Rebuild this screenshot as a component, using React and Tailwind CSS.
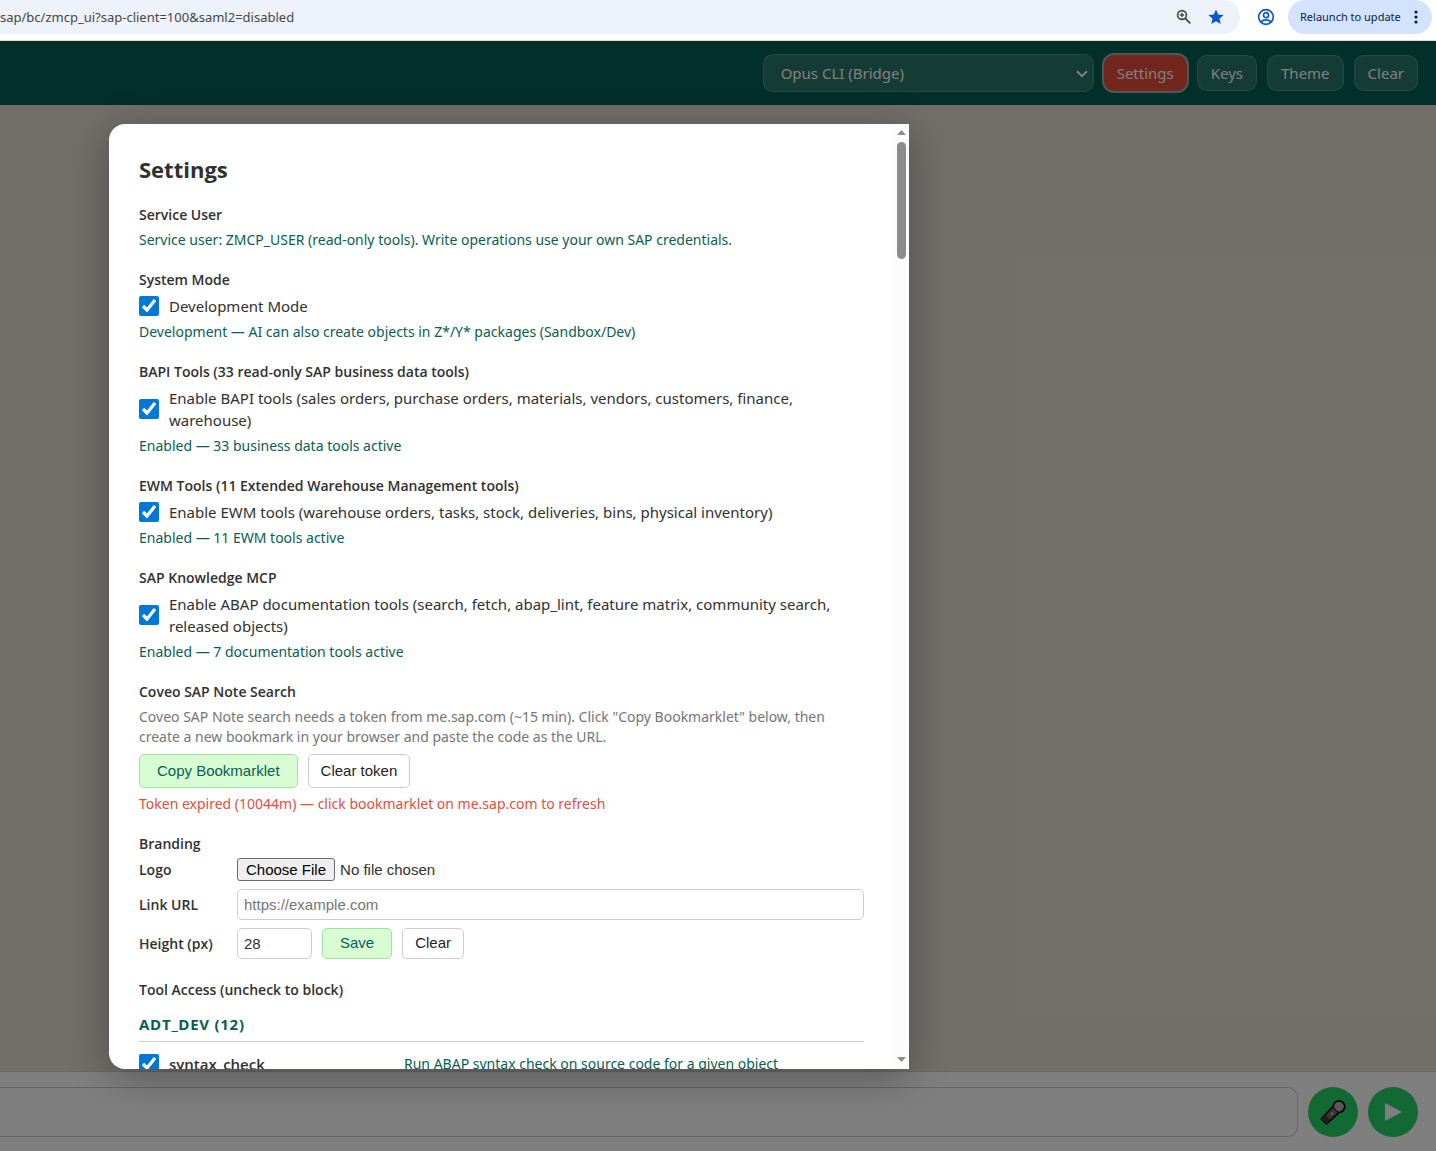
import React from "react";

const labelText = "font-['Open_Sans','Noto_Sans',sans-serif] text-[14px] leading-5 font-semibold text-[#303030]";
const noteText = "text-[14px] leading-5";
const headerButton =
  "flex h-9 items-center rounded-[10px] border border-white/20 bg-white/15 px-[13px] pt-px text-[15px] text-white";
const plainButton =
  "rounded-[5px] border border-[#cccccc] bg-white px-3 font-['Liberation_Sans',Arial,sans-serif] text-[15px] text-[#222]";
const greenButton =
  "rounded-[5px] border border-[#a5e0a0] bg-[#d9fdd3] px-[17px] font-['Liberation_Sans',Arial,sans-serif] text-[15px] text-[#075e54]";
const field =
  "h-[31px] rounded-[5px] border border-[#cccccc] bg-white px-1.5 font-['Liberation_Sans',Arial,sans-serif] text-[15px] text-[#303030] placeholder:text-[#757575]";

function ZoomIcon() {
  return (
    <svg width="16" height="16" viewBox="0 0 16 16" fill="none" stroke="#474747" strokeWidth="1.6">
      <circle cx="6" cy="6" r="4.4" />
      <path d="M9.3 9.3 14.3 14.3" strokeWidth="1.9" />
      <path d="M6 3.8v4.4M3.8 6h4.4" strokeWidth="1.3" />
    </svg>
  );
}

function StarIcon() {
  return (
    <svg width="16" height="16" viewBox="0 0 16 16" fill="#0b57d0">
      <path d="M8 .6 10.2 5.6 15.6 6.1 11.5 9.7 12.7 15 8 12.2 3.3 15 4.5 9.7.4 6.1 5.8 5.6Z" />
    </svg>
  );
}

function ProfileIcon() {
  return (
    <svg width="18" height="18" viewBox="0 0 18 18" fill="none" stroke="#0b57d0" strokeWidth="1.7">
      <circle cx="9" cy="9" r="7.3" />
      <circle cx="9" cy="7.2" r="2.5" />
      <path d="M3.9 14.1c1.3-1.5 3.1-2.2 5.1-2.2s3.8.7 5.1 2.2" />
    </svg>
  );
}

function MicIcon() {
  return (
    <svg width="28" height="28" viewBox="0 0 28 28" strokeLinejoin="round">
      <circle cx="20" cy="8.6" r="5.7" fill="#b0b0b0" stroke="#000" strokeWidth="1.8" />
      <path d="M13.8 8.6 20 14.6 7.6 26 2.2 21Z" fill="#6a6a6a" stroke="#000" strokeWidth="1.6" />
      <path d="M6.2 16.6 11.8 22.2 7.6 26 2.2 21Z" fill="#3c3c3c" stroke="none" />
      <path d="M15 6.6 21.8 13.2 19.4 13.8 14.6 9Z" fill="#8c8c8c" />
      <circle cx="20" cy="8.6" r="4.6" fill="#b0b0b0" />
      <circle cx="13" cy="15.4" r="1.2" fill="#c8c8c8" />
    </svg>
  );
}

function BrowserBar() {
  return (
    <div className="flex h-[41px] shrink-0 items-start border-b border-[#dcdcdc] bg-white pr-1">
      <div className="flex h-[34px] flex-1 items-center rounded-r-full bg-[#edf1fa] pr-4">
        <span className="flex-1 pt-0.5 text-[13px] text-[#474747]">sap/bc/zmcp_ui?sap-client=100&amp;saml2=disabled</span>
        <button type="button" aria-label="Zoom" className="mr-4"><ZoomIcon /></button>
        <button type="button" aria-label="Bookmark"><StarIcon /></button>
      </div>
      <button type="button" aria-label="Profile" className="mr-[13px] ml-[17px] flex h-[34px] items-center"><ProfileIcon /></button>
      <button type="button" className="flex h-[34px] w-36 items-center justify-between rounded-full bg-[#d3e3fd] pr-3.5 pl-3 text-[11px] text-[#041e49]">
        Relaunch to update
        <svg width="4" height="14" viewBox="0 0 4 14" fill="#041e49">
          <circle cx="2" cy="2" r="1.6" />
          <circle cx="2" cy="7" r="1.6" />
          <circle cx="2" cy="12" r="1.6" />
        </svg>
      </button>
    </div>
  );
}

function Header() {
  return (
    <header className="flex h-16 shrink-0 items-center justify-end gap-2.5 bg-[#075e54] pr-[18px]">
      <div className="relative">
        <select aria-label="Model" className="h-[38px] w-[331px] appearance-none rounded-[10px] border border-white/20 bg-white/15 px-[17px] pt-px text-[15px] text-white">
          <option>Opus CLI (Bridge)</option>
        </select>
        <svg className="pointer-events-none absolute top-4 right-1.5" width="12" height="8" viewBox="0 0 12 8" fill="none" stroke="#fff" strokeWidth="2">
          <path d="M1 1.2 6 6.2 11 1.2" />
        </svg>
      </div>
      <button type="button" className="flex h-9 items-center rounded-[10px] bg-[#e74c3c] px-[13px] pt-px text-[15px] text-white ring-2 ring-[#9ab0ad]">Settings</button>
      <button type="button" className={headerButton}>Keys</button>
      <button type="button" className={headerButton}>Theme</button>
      <button type="button" className={headerButton}>Clear</button>
    </header>
  );
}

function Composer() {
  return (
    <footer className="flex h-20 shrink-0 items-center gap-2.5 border-t border-[#d0d0d0] bg-white pr-[18px]">
      <input aria-label="Message" className="h-[50px] min-w-0 flex-1 rounded-r-[10px] border border-l-0 border-[#cccccc] bg-white px-4" />
      <button type="button" aria-label="Record" className="flex size-[50px] items-center justify-center rounded-full bg-[#25d366]"><MicIcon /></button>
      <button type="button" aria-label="Send" className="flex size-[50px] items-center justify-center rounded-full bg-[#25d366]">
        <svg width="18" height="18" viewBox="0 0 18 18" fill="#fff"><path d="M1 0 18 9 1 18Z" /></svg>
      </button>
    </footer>
  );
}

function Section({ title, note, children }) {
  return (
    <section className="mb-5 flex flex-col gap-[5px]">
      <h3 className={labelText}>{title}</h3>
      {children}
      {note && <p className={`${noteText} text-[#075e54]`}>{note}</p>}
    </section>
  );
}

function Toggle({ children }) {
  return (
    <label className="flex items-center gap-2.5 text-[15px] leading-[22px] text-[#303030]">
      <input type="checkbox" defaultChecked className="size-5 shrink-0 accent-[#0078d7]" />
      <span>{children}</span>
    </label>
  );
}

function ScrollTrack() {
  return (
    <div className="flex w-[15px] shrink-0 flex-col items-center bg-[#fcfcfc] pt-1.5 pb-[7px]" aria-hidden="true">
      <svg width="9" height="5" viewBox="0 0 9 5" fill="#8b8b8b"><path d="M0 5 4.5 0 9 5Z" /></svg>
      <div className="mt-[7px] h-[117px] w-[9px] rounded-full bg-[#8b8b8b]" />
      <svg className="mt-auto" width="9" height="5" viewBox="0 0 9 5" fill="#8b8b8b"><path d="M0 0 4.5 5 9 0Z" /></svg>
    </div>
  );
}

function SettingsDialog() {
  return (
    <div role="dialog" aria-labelledby="settings-title" className="flex h-full w-[800px] overflow-hidden rounded-l-2xl bg-white shadow-[0_8px_40px_rgba(0,0,0,0.3)]">
      <div className="min-w-0 flex-1 overflow-hidden px-[30px] pt-[30px]">
        <h2 id="settings-title" className="mb-[21px] font-['Open_Sans','Noto_Sans',sans-serif] text-[22px] leading-[30px] font-bold text-[#303030]">Settings</h2>

        <Section title="Service User" note="Service user: ZMCP_USER (read-only tools). Write operations use your own SAP credentials." />
        <Section title="System Mode" note="Development — AI can also create objects in Z*/Y* packages (Sandbox/Dev)">
          <Toggle>Development Mode</Toggle>
        </Section>
        <Section title="BAPI Tools (33 read-only SAP business data tools)" note="Enabled — 33 business data tools active">
          <Toggle>Enable BAPI tools (sales orders, purchase orders, materials, vendors, customers, finance, warehouse)</Toggle>
        </Section>
        <Section title="EWM Tools (11 Extended Warehouse Management tools)" note="Enabled — 11 EWM tools active">
          <Toggle>Enable EWM tools (warehouse orders, tasks, stock, deliveries, bins, physical inventory)</Toggle>
        </Section>
        <Section title="SAP Knowledge MCP" note="Enabled — 7 documentation tools active">
          <Toggle>Enable ABAP documentation tools (search, fetch, abap_lint, feature matrix, community search, released objects)</Toggle>
        </Section>
        <Section title="Coveo SAP Note Search">
          <p className={`${noteText} text-[#757575]`}>
            Coveo SAP Note search needs a token from me.sap.com (~15 min). Click "Copy Bookmarklet" below, then create a new bookmark in your browser and paste the code as the URL.
          </p>
          <div className="mt-0.5 mb-px flex h-[34px] gap-2.5">
            <button type="button" className={greenButton}>Copy Bookmarklet</button>
            <button type="button" className={plainButton}>Clear token</button>
          </div>
          <p className={`${noteText} text-[#e74c3c]`}>Token expired (10044m) — click bookmarklet on me.sap.com to refresh</p>
        </Section>

        <section className="mb-[21px]">
          <h3 className={labelText}>Branding</h3>
          <div className="mt-1 grid grid-cols-[88px_1fr] items-center gap-x-2.5 gap-y-2">
            <label htmlFor="logo" className={labelText}>Logo</label>
            <input
              id="logo"
              type="file"
              className="h-[23px] font-['Liberation_Sans',Arial,sans-serif] text-[15px] leading-[21px] text-[#303030] file:mr-[5px] file:h-[23px] file:rounded-[3px] file:border file:border-solid file:border-[#6b6b6b] file:bg-[#efefef] file:px-2 file:text-black"
            />
            <label htmlFor="link" className={labelText}>Link URL</label>
            <input id="link" type="text" placeholder="https://example.com" className={field} />
            <label htmlFor="height" className={labelText}>Height (px)</label>
            <div className="flex gap-2.5">
              <input id="height" type="text" defaultValue="28" className={`${field} w-[75px]`} />
              <button type="button" className={greenButton}>Save</button>
              <button type="button" className={plainButton}>Clear</button>
            </div>
          </div>
        </section>

        <section>
          <h3 className={labelText}>Tool Access (uncheck to block)</h3>
          <h4 className="mt-3.5 border-b border-[#cccccc] pb-[7px] font-['Open_Sans','Noto_Sans',sans-serif] text-[15px] leading-5 font-bold tracking-wider text-[#075e54]">ADT_DEV (12)</h4>
          <div className="mt-2.5 flex items-center">
            <label className="flex w-[265px] items-center gap-2.5 font-['Open_Sans','Noto_Sans',sans-serif] text-[15px] leading-6 font-semibold text-[#303030]">
              <input type="checkbox" defaultChecked className="size-5 accent-[#0078d7]" />
              syntax_check
            </label>
            <span className={`${noteText} text-[#075e54]`}>Run ABAP syntax check on source code for a given object</span>
          </div>
        </section>
      </div>
      <ScrollTrack />
    </div>
  );
}

export default function App() {
  return (
    <div className="flex h-screen flex-col overflow-hidden font-['Noto_Sans','Open_Sans',sans-serif]">
      <BrowserBar />
      <div className="relative flex min-h-0 flex-1 flex-col">
        <Header />
        <main className="flex-1 bg-[#e5ddd5]" />
        <Composer />
        <div className="absolute inset-0 bg-black/50 pt-[83px] pb-[82px] pl-[109px]">
          <SettingsDialog />
        </div>
      </div>
    </div>
  );
}
